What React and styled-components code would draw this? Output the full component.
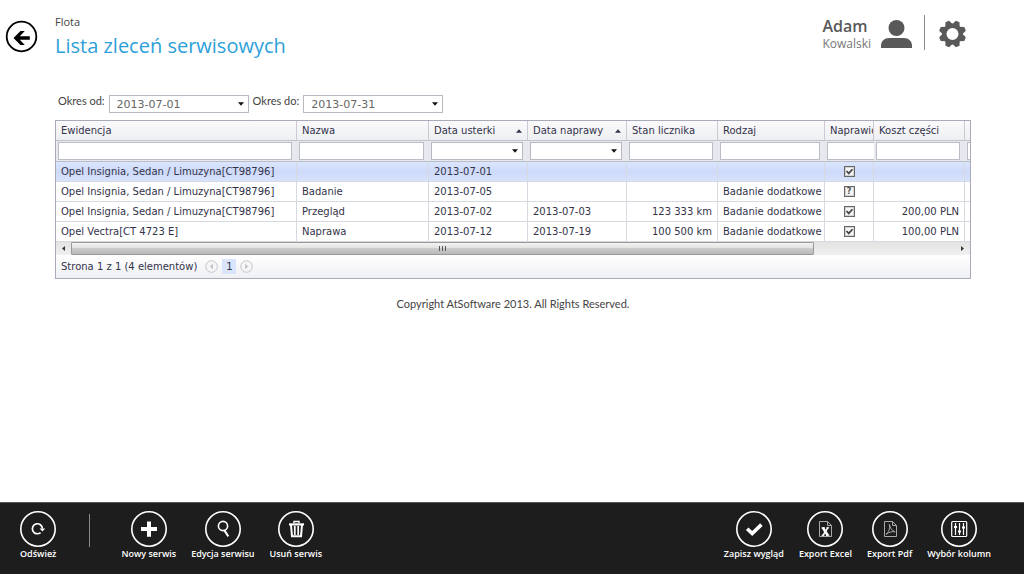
import React, { useState } from 'react';
import styled, { createGlobalStyle, css } from 'styled-components';

const uiFont = '"Open Sans", "Noto Sans", sans-serif';
const smallFont = 'Lato, "Open Sans", sans-serif';
const gridFont = '"DejaVu Sans", Verdana, sans-serif';

const GlobalStyle = createGlobalStyle`
  * {
    box-sizing: border-box;
  }
  body {
    margin: 0;
    background: #fff;
    font-family: ${uiFont};
  }
  button, input {
    font-family: inherit;
  }
`;

const Page = styled.div`
  display: flex;
  flex-direction: column;
  min-height: 100vh;
`;

const Header = styled.header`
  display: flex;
  align-items: flex-start;
  padding: 14px 57px 0 5px;
  height: 93px;
`;

const IconButton = styled.button`
  display: flex;
  padding: 0;
  border: none;
  background: none;
  color: inherit;
  cursor: pointer;
`;

const BackButton = styled(IconButton)`
  margin: 6px 17px 0 0;
`;

const Titles = styled.div`
  flex: 1;
`;

const Section = styled.div`
  font-size: 11px;
  line-height: 16px;
  color: #444;
`;

const Title = styled.h1`
  margin: 3px 0 0;
  font-size: 20px;
  font-weight: 400;
  line-height: 26px;
  color: #2d9fd9;
`;

const UserBox = styled.div`
  display: flex;
  align-items: flex-start;
  color: #595959;
`;

const UserName = styled.div`
  margin: 2px 9px 0 0;
`;

const FirstName = styled.div`
  font-size: 16px;
  font-weight: 600;
  line-height: 20px;
`;

const LastName = styled.div`
  font-size: 12px;
  line-height: 16px;
  color: #777;
`;

const Separator = styled.span`
  width: 1px;
  height: ${(props) => props.$height}px;
  margin: ${(props) => props.$margin};
  background: #8a8a8a;
`;

const Main = styled.main`
  flex: 1;
  padding: 0 53px 0 55px;
`;

const Period = styled.form`
  display: flex;
  align-items: flex-start;
  gap: 4px;
  padding: 0 0 7px 3px;
`;

const PeriodLabel = styled.label`
  font-family: ${smallFont};
  font-size: 11px;
  line-height: 16px;
  color: #444;
`;

const Combo = styled.div`
  display: flex;
  width: ${(props) => props.$width || 'auto'};
  height: 18px;
  margin-top: ${(props) => props.$top || 0}px;
  border: 1px solid #b8b8c0;
  background: #fff;
`;

const ComboInput = styled.input`
  flex: 1;
  min-width: 0;
  padding: 0 0 0 7px;
  border: none;
  outline: none;
  background: none;
  font-family: ${gridFont};
  font-size: 11px;
  color: #666;
`;

const ComboButton = styled(IconButton)`
  align-items: center;
  justify-content: center;
  width: 14px;
  color: #111;
`;

const Grid = styled.section`
  border: 1px solid #a9acb8;
  font-family: ${gridFont};
  font-size: 10px;
  color: #33334a;
  overflow: hidden;
`;

const Table = styled.table`
  width: 100%;
  table-layout: fixed;
  border-collapse: separate;
  border-spacing: 0;
`;

const HeadCell = styled.th`
  height: 20px;
  padding: 0 0 0 5px;
  border-right: 1px solid #c9cad3;
  border-bottom: 1px solid #c0c2cc;
  background: linear-gradient(#fafafb, #eeeff2);
  font-weight: 400;
  line-height: 19px;
  text-align: left;
  white-space: nowrap;
  overflow: hidden;

  &:last-child {
    border-right: none;
  }
`;

const HeadLabel = styled.span`
  display: flex;
  align-items: center;
  justify-content: space-between;
  padding-right: ${(props) => (props.$sorted ? 5 : 0)}px;
`;

const FilterCell = styled.td`
  height: 21px;
  padding: 1px ${(props) => (props.$clipped ? 0 : 4)}px 1px 2px;
  border-right: ${(props) => (props.$clipped ? 0 : 1)}px solid #e6e7ec;
  border-bottom: 1px solid #b9bcc9;
  background: #e8e9ee;
  vertical-align: top;
  overflow: hidden;
`;

const FilterInput = styled.input`
  display: block;
  width: 100%;
  height: 18px;
  padding: 0 3px;
  border: 1px solid #babcc6;
  border-right-width: ${(props) => (props.$clipped ? 0 : 1)}px;
  outline: none;
  font-size: 10px;
`;

const Row = styled.tr`
  ${(props) =>
    props.$selected &&
    css`
      background: linear-gradient(#dbe5fd, #cddaf9 50%, #d9e4fd);
    `}
`;

const Cell = styled.td`
  height: 20px;
  padding: 0 5px;
  border-right: 1px solid #d7d9e0;
  border-bottom: 1px solid #d7d9e0;
  line-height: 19px;
  text-align: ${(props) => props.$align || 'left'};
  white-space: nowrap;
  overflow: hidden;

  &:last-child {
    border-right: none;
  }
`;

const CheckWrap = styled.label`
  position: relative;
  display: block;
  width: 11px;
  height: 11px;
  margin: 0 auto;
`;

const CheckInput = styled.input`
  appearance: none;
  display: block;
  width: 11px;
  height: 11px;
  margin: 0;
  border: 1px solid #666;
  background: #f6f6f6;
  box-shadow: inset 0 0 0 1px #d2d2d2;
`;

const CheckMark = styled.svg`
  position: absolute;
  inset: 0;
  pointer-events: none;
`;

const CheckUnknown = styled.span`
  position: absolute;
  inset: 0;
  font-size: 8px;
  font-weight: 700;
  line-height: 11px;
  text-align: center;
  color: #555;
  pointer-events: none;
`;

const Scroll = styled.div`
  display: flex;
  height: 13px;
  background: linear-gradient(#e3e3e3, #f0f0f0);
`;

const ScrollButton = styled(IconButton)`
  align-items: center;
  justify-content: center;
  width: 15px;
  color: #333;
`;

const Track = styled.div`
  flex: 1;
`;

const Thumb = styled.div`
  display: flex;
  align-items: center;
  justify-content: center;
  width: 84%;
  height: 13px;
  border: 1px solid #999;
  border-radius: 1px;
  background: linear-gradient(#f4f4f4, #e2e2e2 45%, #cbcbcb 50%, #b9b9b9);
`;

const Pager = styled.nav`
  display: flex;
  align-items: center;
  height: 23px;
  padding-left: 5px;
  background: linear-gradient(#fff, #eff0f4);
`;

const PagerText = styled.span`
  margin-right: 8px;
`;

const PageButton = styled(IconButton)`
  align-items: center;
  justify-content: center;
  width: 14px;
  height: 15px;
  margin: 0 4px;
  background: #dae4fc;
  font-size: 10px;
`;

const Copyright = styled.p`
  margin: 17px 0 0;
  font-family: ${smallFont};
  font-size: 11px;
  line-height: 16px;
  text-align: center;
  color: #444;
`;

const AppBar = styled.footer`
  display: flex;
  align-items: flex-start;
  gap: 15px;
  height: 72px;
  padding: 8px 33px 0 20px;
  border-top: 1px solid #555;
  background: #1d1d1d;
`;

const BarGroup = styled.div`
  display: flex;
  gap: 15px;
`;

const Spacer = styled.div`
  flex: 1;
`;

const BarButton = styled.button`
  display: flex;
  flex-direction: column;
  align-items: center;
  padding: 0;
  border: none;
  background: none;
  color: #fff;
  font-size: 9px;
  font-weight: 600;
  line-height: 14px;
  white-space: nowrap;
  cursor: pointer;
`;

const arrowPaths = {
  up: 'M0 4h5L2.5 1z',
  down: 'M0 1h5L2.5 4z',
  left: 'M4 0v5L1 2.5z',
  right: 'M1 0v5l3-2.5z',
};

const Arrow = ({ dir, size = 5 }) => (
  <svg width={size} height={size} viewBox="0 0 5 5" fill="currentColor">
    <path d={arrowPaths[dir]} />
  </svg>
);

const PagerArrow = ({ dir }) => (
  <svg width="13" height="13" viewBox="0 0 13 13">
    <circle cx="6.5" cy="6.5" r="5.8" fill="#f5f5f7" stroke="#c6c6cb" />
    <path
      d={dir === 'left' ? 'M7.8 3.8v5.4L5 6.5z' : 'M5.2 3.8v5.4L8 6.5z'}
      fill="#bcbcc2"
    />
  </svg>
);

const barIcons = {
  refresh: (
    <g fill="none" stroke="#fff" strokeWidth="1.7">
      <path d="M20.6 21.6a5 5 0 1 1 1.8-4" />
      <path d="M19.6 17.4h5.6l-2.8 3z" fill="#fff" stroke="none" />
    </g>
  ),
  add: <path d="M16 10.5h4v5.6h6v4h-6v5.7h-4v-5.7h-6v-4h6z" fill="#fff" />,
  edit: (
    <g fill="none" stroke="#fff">
      <circle cx="18" cy="15" r="4.6" strokeWidth="1.6" />
      <path d="M19.4 19.4l3.9 6" strokeWidth="2" />
    </g>
  ),
  remove: (
    <g fill="none" stroke="#fff">
      <path d="M11 13.4h15" strokeWidth="2.2" />
      <path d="M16 12v-1.5h5V12" strokeWidth="1.4" />
      <path d="M13 14l1 11.2h9L24 14" strokeWidth="2" />
      <path d="M16.8 15v9M20.2 15v9" strokeWidth="1.7" />
    </g>
  ),
  save: <path d="M11.2 17.8l5 4.8 9.2-9" fill="none" stroke="#fff" strokeWidth="3.6" />,
  excel: (
    <g fill="none" stroke="#aaa">
      <path d="M12.5 10.5h8l4 4v11h-12z" />
      <path d="M20.5 10.5v4h4" />
      <path d="M15.8 16.5l5 8" stroke="#fff" strokeWidth="2.6" />
      <path d="M21 16.5l-5.2 8" stroke="#fff" strokeWidth="1.5" />
      <path d="M14.5 16.8h3.3M19.4 16.8h2.8M14.6 24.3h2.8M19 24.3h3.4" stroke="#fff" />
    </g>
  ),
  pdf: (
    <g fill="none" stroke="#aaa">
      <path d="M12.5 10.5h8l4 4v11h-12z" />
      <path d="M20.5 10.5v4h4" />
      <path d="M17.3 13.4c1 3.5 2 6 5.8 7.4-3-.5-5.8.2-9 2.5 2.4-2 4.2-5.6 3.2-9.9z" />
    </g>
  ),
  columns: (
    <g fill="none" stroke="#fff">
      <rect x="10.7" y="10.5" width="15" height="15" rx="1" strokeWidth="1.2" />
      <path d="M14.5 12v12M18.5 12v12M22.5 12v12" strokeWidth="1.2" />
      <path d="M13 16h3M17 20.5h3M21 16.5h3" strokeWidth="2" />
    </g>
  ),
};

const BarAction = ({ icon, children }) => (
  <BarButton type="button">
    <svg width="36" height="36" viewBox="0 0 36 36">
      <circle cx="18" cy="18" r="17.2" fill="none" stroke="#fff" strokeWidth="1.6" />
      {barIcons[icon]}
    </svg>
    {children}
  </BarButton>
);

const DateField = ({ id, value, onChange }) => (
  <Combo $width="140px" $top={2}>
    <ComboInput id={id} value={value} onChange={(e) => onChange(e.target.value)} />
    <ComboButton type="button" aria-label="Kalendarz">
      <Arrow dir="down" size={6} />
    </ComboButton>
  </Combo>
);

const RepairedBox = ({ state }) => (
  <CheckWrap>
    <CheckInput type="checkbox" aria-label="Naprawiono" defaultChecked={state === 'yes'} />
    {state === 'yes' ? (
      <CheckMark width="11" height="11" viewBox="0 0 11 11">
        <path d="M2.5 5l2.2 2.4L8.5 3.2" fill="none" stroke="#444" strokeWidth="1.7" />
      </CheckMark>
    ) : (
      <CheckUnknown>?</CheckUnknown>
    )}
  </CheckWrap>
);

const columns = [
  { key: 'vehicle', label: 'Ewidencja', width: 241 },
  { key: 'name', label: 'Nazwa', width: 132 },
  { key: 'failure', label: 'Data usterki', width: 99, date: true },
  { key: 'repair', label: 'Data naprawy', width: 99, date: true },
  { key: 'mileage', label: 'Stan licznika', width: 91, align: 'right' },
  { key: 'kind', label: 'Rodzaj', width: 107 },
  { key: 'repaired', label: 'Naprawio', width: 49, clipped: true },
  { key: 'cost', label: 'Koszt części', width: 91, align: 'right' },
  { key: 'more', label: '', clipped: true },
];

const orders = [
  { vehicle: 'Opel Insignia, Sedan / Limuzyna[CT98796]', failure: '2013-07-01', repaired: 'yes' },
  {
    vehicle: 'Opel Insignia, Sedan / Limuzyna[CT98796]',
    name: 'Badanie',
    failure: '2013-07-05',
    kind: 'Badanie dodatkowe',
    repaired: 'unknown',
  },
  {
    vehicle: 'Opel Insignia, Sedan / Limuzyna[CT98796]',
    name: 'Przegląd',
    failure: '2013-07-02',
    repair: '2013-07-03',
    mileage: '123 333 km',
    kind: 'Badanie dodatkowe',
    repaired: 'yes',
    cost: '200,00 PLN',
  },
  {
    vehicle: 'Opel Vectra[CT 4723 E]',
    name: 'Naprawa',
    failure: '2013-07-12',
    repair: '2013-07-19',
    mileage: '100 500 km',
    kind: 'Badanie dodatkowe',
    repaired: 'yes',
    cost: '100,00 PLN',
  },
];

const OrdersGrid = () => {
  const [selected, setSelected] = useState(0);

  return (
    <Grid>
      <Table>
        <colgroup>
          {columns.map((col) => (
            <col key={col.key} width={col.width} />
          ))}
        </colgroup>
        <thead>
          <tr>
            {columns.map((col) => (
              <HeadCell key={col.key}>
                <HeadLabel $sorted={col.date}>
                  {col.label}
                  {col.date && <Arrow dir="up" size={6} />}
                </HeadLabel>
              </HeadCell>
            ))}
          </tr>
        </thead>
        <tbody>
          <tr>
            {columns.map((col) => (
              <FilterCell key={col.key} $clipped={col.clipped}>
                {col.date ? (
                  <Combo>
                    <ComboInput aria-label={col.label} />
                    <ComboButton type="button" aria-label="Kalendarz">
                      <Arrow dir="down" size={6} />
                    </ComboButton>
                  </Combo>
                ) : (
                  <FilterInput aria-label={col.label || 'Filtr'} $clipped={col.clipped} />
                )}
              </FilterCell>
            ))}
          </tr>
          {orders.map((order, i) => (
            <Row key={i} $selected={i === selected} onClick={() => setSelected(i)}>
              {columns.map((col) => (
                <Cell key={col.key} $align={col.align}>
                  {col.key === 'repaired' ? <RepairedBox state={order.repaired} /> : order[col.key]}
                </Cell>
              ))}
            </Row>
          ))}
        </tbody>
      </Table>
      <Scroll>
        <ScrollButton type="button" aria-label="W lewo">
          <Arrow dir="left" />
        </ScrollButton>
        <Track>
          <Thumb>
            <svg width="8" height="5" viewBox="0 0 8 5" stroke="#555">
              <path d="M1.5 0v5M4.5 0v5M7.5 0v5" />
            </svg>
          </Thumb>
        </Track>
        <ScrollButton type="button" aria-label="W prawo">
          <Arrow dir="right" />
        </ScrollButton>
      </Scroll>
      <Pager>
        <PagerText>Strona 1 z 1 (4 elementów)</PagerText>
        <IconButton type="button" aria-label="Poprzednia">
          <PagerArrow dir="left" />
        </IconButton>
        <PageButton type="button">1</PageButton>
        <IconButton type="button" aria-label="Następna">
          <PagerArrow dir="right" />
        </IconButton>
      </Pager>
    </Grid>
  );
};

const App = () => {
  const [from, setFrom] = useState('2013-07-01');
  const [to, setTo] = useState('2013-07-31');

  return (
    <Page>
      <GlobalStyle />
      <Header>
        <BackButton type="button" aria-label="Wstecz">
          <svg width="33" height="33" viewBox="0 0 33 33">
            <circle cx="16.5" cy="16.5" r="14.8" fill="none" stroke="#000" strokeWidth="1.8" />
            <path d="M8.5 18l7-7h4.3l-5 5.2h10v3.6h-10l5 5.2h-4.3z" fill="#000" />
          </svg>
        </BackButton>
        <Titles>
          <Section>Flota</Section>
          <Title>Lista zleceń serwisowych</Title>
        </Titles>
        <UserBox>
          <UserName>
            <FirstName>Adam</FirstName>
            <LastName>Kowalski</LastName>
          </UserName>
          <svg width="33" height="36" viewBox="0 0 33 36" fill="#595959">
            <circle cx="16.5" cy="14" r="8" />
            <path d="M1 34v-2.5c0-4 3.5-7.5 8-7.5h15c4.5 0 8 3.5 8 7.5V34z" />
          </svg>
          <Separator $height={35} $margin="1px 13px 0 11px" />
          <IconButton type="button" aria-label="Ustawienia">
            <svg width="29" height="40" viewBox="-14.5 -20 29 40" fill="#595959">
              <circle r="8.2" fill="none" stroke="#595959" strokeWidth="4.4" />
              {[22.5, 67.5, 112.5, 157.5, 202.5, 247.5, 292.5, 337.5].map((angle) => (
                <path
                  key={angle}
                  d="M-4-9l2-4.6h4l2 4.6z"
                  transform={`rotate(${angle})`}
                />
              ))}
            </svg>
          </IconButton>
        </UserBox>
      </Header>
      <Main>
        <Period>
          <PeriodLabel htmlFor="from">Okres od:</PeriodLabel>
          <DateField id="from" value={from} onChange={setFrom} />
          <PeriodLabel htmlFor="to">Okres do:</PeriodLabel>
          <DateField id="to" value={to} onChange={setTo} />
        </Period>
        <OrdersGrid />
        <Copyright>Copyright AtSoftware 2013. All Rights Reserved.</Copyright>
      </Main>
      <AppBar>
        <BarAction icon="refresh">Odśwież</BarAction>
        <Separator $height={33} $margin="3px 16px 0 18px" />
        <BarGroup>
          <BarAction icon="add">Nowy serwis</BarAction>
          <BarAction icon="edit">Edycja serwisu</BarAction>
          <BarAction icon="remove">Usuń serwis</BarAction>
        </BarGroup>
        <Spacer />
        <BarGroup>
          <BarAction icon="save">Zapisz wygląd</BarAction>
          <BarAction icon="excel">Export Excel</BarAction>
          <BarAction icon="pdf">Export Pdf</BarAction>
          <BarAction icon="columns">Wybór kolumn</BarAction>
        </BarGroup>
      </AppBar>
    </Page>
  );
};

export default App;
